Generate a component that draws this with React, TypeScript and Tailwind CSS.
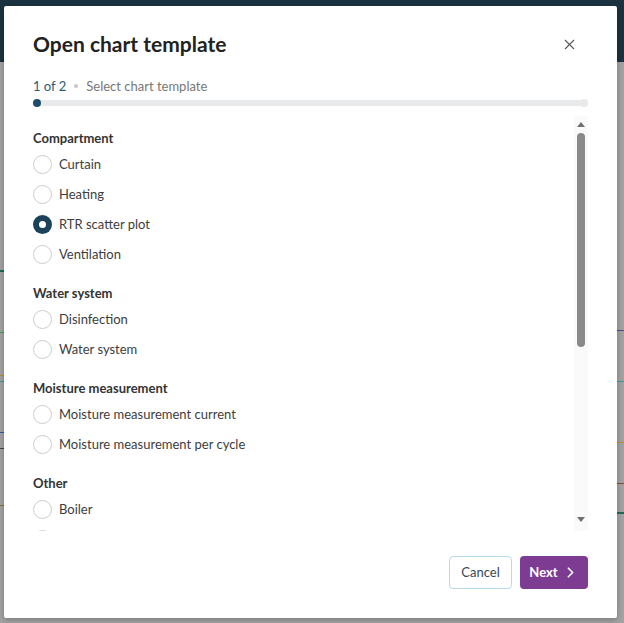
import { X, ChevronRight } from "lucide-react";

type Section = { title: string; items: string[] };

const SECTIONS: Section[] = [
  { title: "Compartment", items: ["Curtain", "Heating", "RTR scatter plot", "Ventilation"] },
  { title: "Water system", items: ["Disinfection", "Water system"] },
  {
    title: "Moisture measurement",
    items: ["Moisture measurement current", "Moisture measurement per cycle"],
  },
  { title: "Other", items: ["Boiler", ""] },
];

const SELECTED = "RTR scatter plot";

export default function App() {
  return (
    <div className="relative h-[623px] w-[624px] overflow-hidden bg-[#a3a3a3] font-['Lato','Liberation_Sans',sans-serif]">
      <BackdropPage />
      <div className="absolute left-[4px] top-[6px] flex h-[612px] w-[613px] flex-col rounded-[2px] bg-white shadow-[0_2px_6px_rgba(0,0,0,0.25)]">
        <header className="mt-[24px] flex h-[28px] items-center justify-between pl-[29px] pr-[39px]">
          <h1 className="text-[21px] font-bold leading-[28px] text-[#222]">Open chart template</h1>
          <X className="size-[17px] text-[#555]" strokeWidth={1.5} />
        </header>

        <div className="mt-[19px] flex h-[18px] items-center gap-[8px] pl-[29px] text-[13px] leading-[18px]">
          <span className="text-[#2a5b78]">1 of 2</span>
          <span className="size-[4px] rounded-full bg-[#c9c9c9]" />
          <span className="text-[#777]">Select chart template</span>
        </div>

        <div className="mx-[29px] mt-[4px] flex h-[8px] items-center">
          <div className="relative flex h-[6px] flex-1 items-center rounded-full bg-[#e8e9eb]">
            <span className="absolute left-0 size-[8px] rounded-full bg-[#1e4d69]" />
            <span className="absolute right-0 size-[8px] rounded-full bg-[#e8e9eb]" />
          </div>
        </div>

        <div className="mx-[29px] mt-[9px] flex h-[415px]">
          <div className="flex-1 overflow-hidden pt-[12px]">
            <div className="flex flex-col gap-[14px]">
              {SECTIONS.map((section) => (
                <section key={section.title}>
                  <h2 className="text-[13px] font-bold leading-[20px] text-[#333]">
                    {section.title}
                  </h2>
                  <div className="pt-[1px]">
                    {section.items.map((item, index) => (
                      <RadioRow
                        key={`${section.title}-${index}`}
                        label={item}
                        checked={item === SELECTED}
                      />
                    ))}
                  </div>
                </section>
              ))}
            </div>
          </div>
          <FakeScrollbar />
        </div>

        <footer className="mt-auto mb-[29px] flex justify-end gap-[8px] pr-[29px]">
          <button
            type="button"
            className="h-[33px] w-[63px] rounded-[4px] border border-[#b5dcea] bg-white text-[13px] text-[#34495a]"
          >
            Cancel
          </button>
          <button
            type="button"
            className="flex h-[33px] w-[68px] items-center justify-center gap-[4px] rounded-[4px] bg-[#7d3c92] text-[13px] font-bold text-white"
          >
            Next
            <ChevronRight className="size-[17px]" strokeWidth={2.4} />
          </button>
        </footer>
      </div>
    </div>
  );
}

function RadioRow({ label, checked }: { label: string; checked: boolean }) {
  return (
    <div className="flex h-[30px] items-center gap-[7px]">
      {checked ? (
        <span className="flex size-[19px] items-center justify-center rounded-full bg-[#1c4259]">
          <span className="size-[7px] rounded-full bg-white" />
        </span>
      ) : (
        <span className="size-[19px] rounded-full border border-[#cdcdcd] bg-white" />
      )}
      {label ? <span className="text-[13px] leading-[18px] text-[#3d3d3d]">{label}</span> : null}
    </div>
  );
}

function FakeScrollbar() {
  return (
    <div className="flex w-[14px] flex-col items-center bg-[#fafafa] pt-[6px]">
      <svg viewBox="0 0 8 5" className="h-[5px] w-[8px] fill-[#707070]">
        <path d="M4 0 8 5H0Z" />
      </svg>
      <div className="mt-[6px] h-[214px] w-[8px] rounded-full bg-[#8a8a8a]" />
      <div className="flex-1" />
      <svg viewBox="0 0 8 5" className="mb-[9px] h-[5px] w-[8px] fill-[#707070]">
        <path d="M0 0h8L4 5Z" />
      </svg>
    </div>
  );
}

function BackdropPage() {
  return (
    <div className="flex h-full flex-col">
      <div className="h-[62px] bg-[#1b3340]" />
      <div className="flex flex-1 justify-between">
        <div className="flex w-[4px] flex-col pt-[208px]">
          <span className="h-[2px] bg-[#1d6b55]" />
          <span className="mt-[60px] h-[1px] bg-[#3aa34a]" />
          <span className="mt-[42px] h-[1px] bg-[#b89230]" />
          <span className="mt-[5px] h-[1px] bg-[#3a98a6]" />
          <span className="mt-[50px] h-[1px] bg-[#3855a0]" />
          <span className="mt-[15px] h-[1px] bg-[#444]" />
          <span className="mt-[56px] h-[1px] bg-[#8a6a3a]" />
        </div>
        <div className="flex w-[7px] flex-col pt-[268px]">
          <span className="h-[1px] bg-[#5a4a8a]" />
          <span className="mt-[50px] h-[1px] bg-[#3a98a6]" />
          <span className="mt-[60px] h-[1px] bg-[#b89230]" />
          <span className="mt-[40px] h-[1px] bg-[#8a4a3a]" />
          <span className="mt-[28px] h-[2px] bg-[#1d6b55]" />
        </div>
      </div>
    </div>
  );
}
